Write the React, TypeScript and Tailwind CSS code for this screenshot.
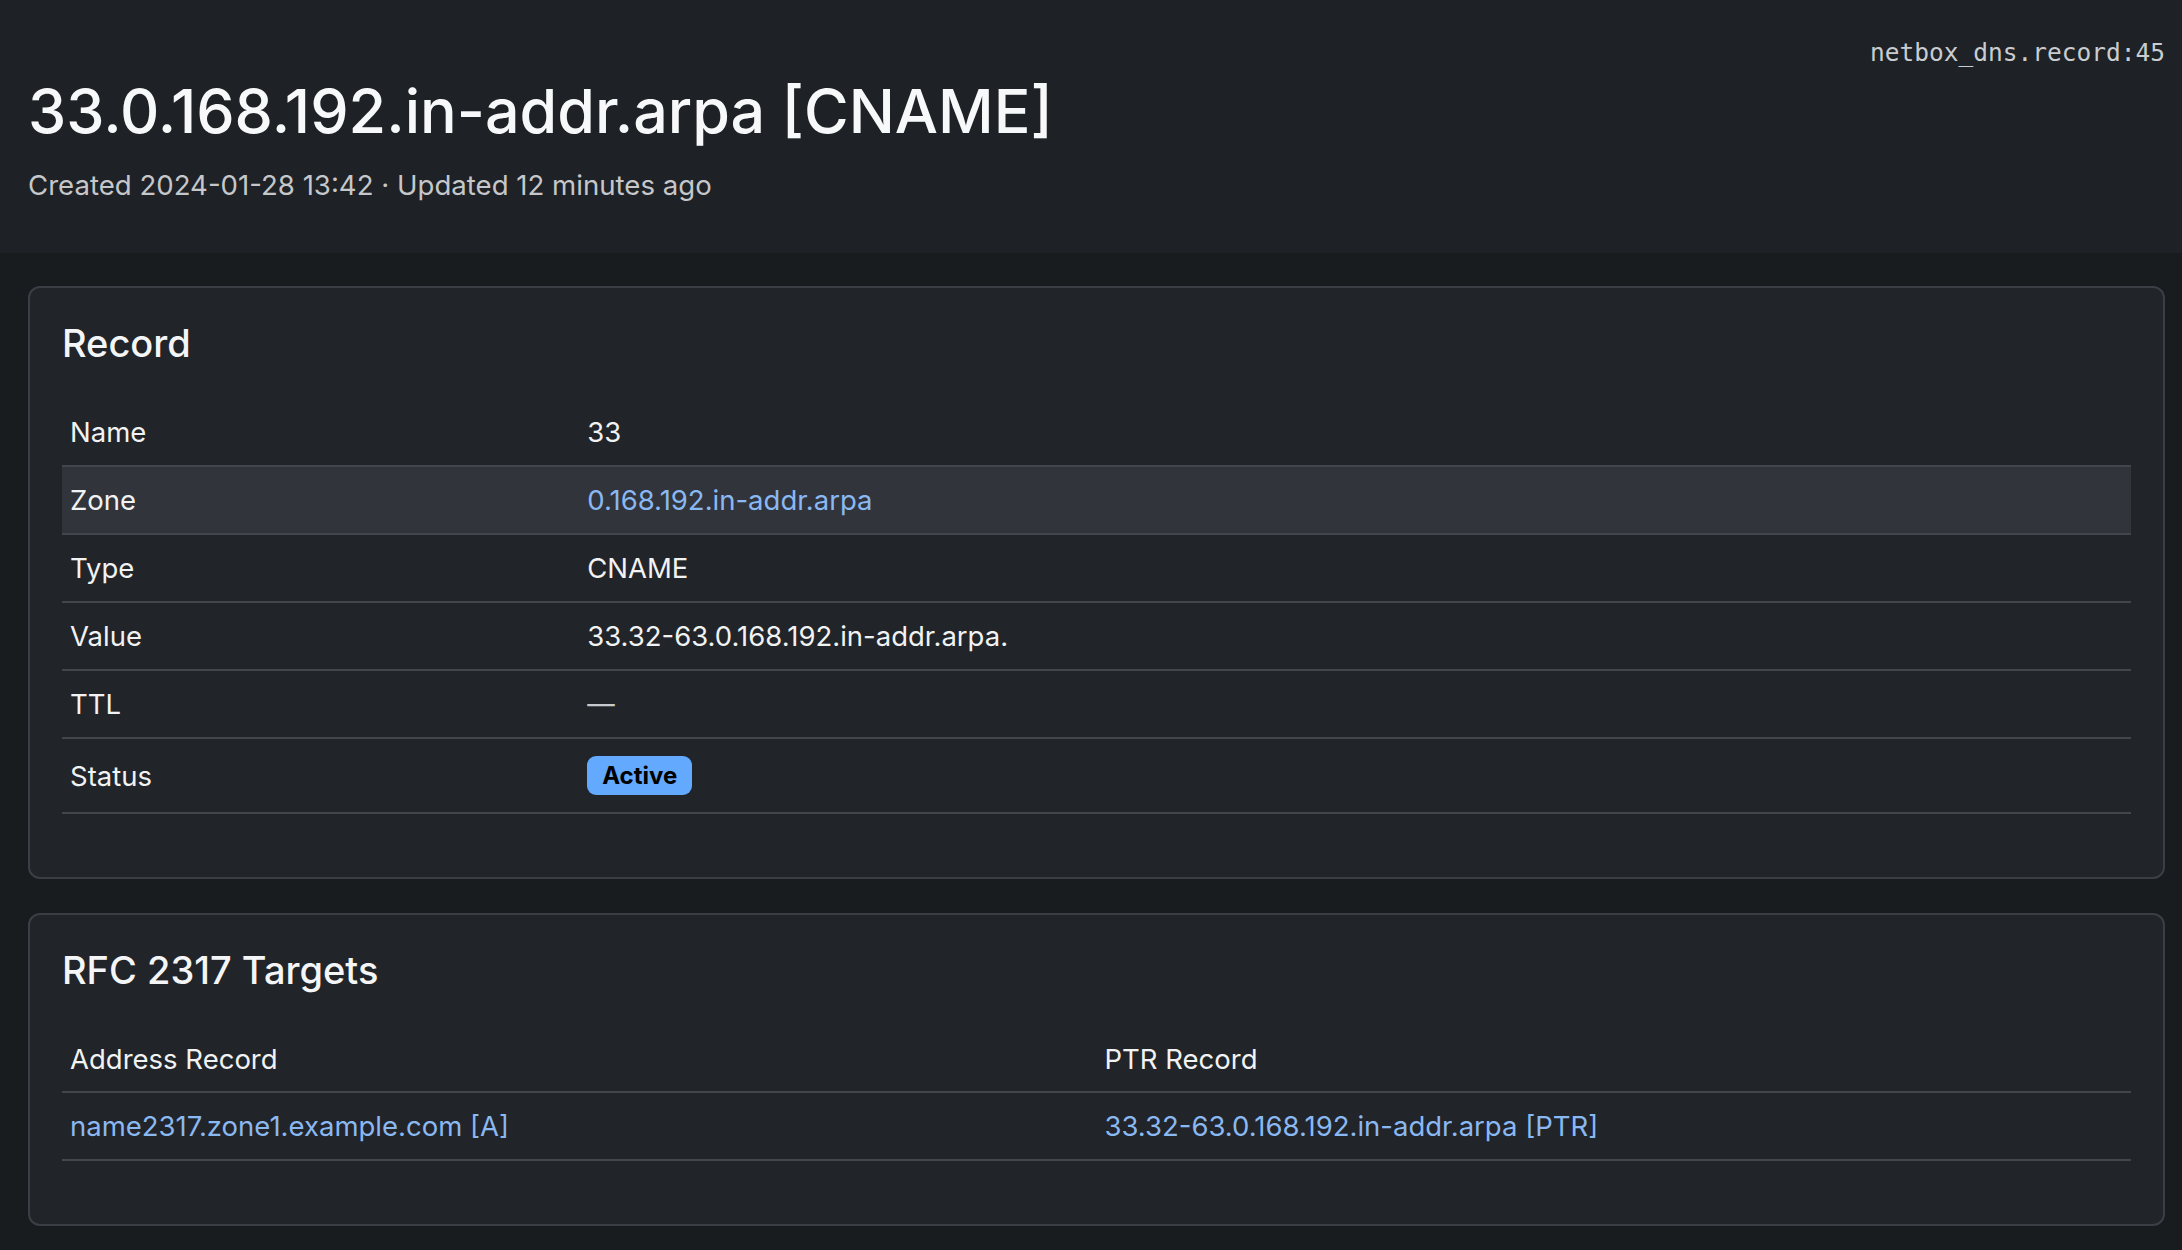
import React from "react";

type Row = { label: string; value: React.ReactNode; highlight?: boolean; tall?: boolean };

const rows: Row[] = [
  { label: "Name", value: "33" },
  {
    label: "Zone",
    value: <a className="text-[#8ab8f2]">0.168.192.in-addr.arpa</a>,
    highlight: true,
  },
  { label: "Type", value: "CNAME" },
  { label: "Value", value: "33.32-63.0.168.192.in-addr.arpa." },
  { label: "TTL", value: <span className="text-[#c8c9cc]">—</span> },
  {
    label: "Status",
    value: (
      <span className="inline-flex h-[39px] items-center rounded-[9px] bg-[#63a9fd] px-[15px] text-[24px] font-bold text-black">
        Active
      </span>
    ),
    tall: true,
  },
];

function Card({ title, bottom, children }: { title: string; bottom: string; children: React.ReactNode }) {
  return (
    <section className={`rounded-[12px] border-2 border-[#3b3f45] bg-[#212428] px-[32px] pt-[31px] ${bottom}`}>
      <h2 className="mb-[32px] text-[38px] leading-[48px] font-medium text-[#f4f5f6]">{title}</h2>
      {children}
    </section>
  );
}

export default function App() {
  return (
    <div className="min-h-screen bg-[#191c1f] font-['Inter',sans-serif] text-[#f1f2f3]">
      <header className="flex h-[253px] items-start justify-between bg-[#1e2125] pr-[17px] pl-[28px]">
        <div className="pt-[75px]">
          <h1 className="text-[61px] leading-[72px] font-medium text-[#f7f8f9]">
            33.0.168.192.in-addr.arpa [CNAME]
          </h1>
          <div className="mt-[20px] text-[27.6px] leading-[36px] text-[#c5c7ca]">
            Created 2024-01-28 13:42 · Updated 12 minutes ago
          </div>
        </div>
        <div className="pt-[37px] font-['DejaVu_Sans_Mono',monospace] text-[24.5px] leading-[32px] text-[#c9ccd0]">
          netbox_dns.record:45
        </div>
      </header>

      <main className="pt-[33px] pr-[17px] pl-[28px]">
        <Card title="Record" bottom="pb-[63px]">
          <div className="text-[27.5px] leading-[36px]">
            {rows.map((r) => (
              <div
                key={r.label}
                className={`grid grid-cols-[25%_75%] items-center border-b-2 border-[#43474d] ${
                  r.tall ? "h-[75px]" : "h-[68px]"
                } ${r.highlight ? "bg-[#31343a]" : ""}`}
              >
                <div className="px-[8px]">{r.label}</div>
                <div className="px-[8px]">{r.value}</div>
              </div>
            ))}
          </div>
        </Card>

        <div className="mt-[34px]">
          <Card title="RFC 2317 Targets" bottom="pb-[63px]">
            <div className="text-[27.5px] leading-[36px]">
              <div className="grid h-[67px] grid-cols-2 items-center border-b-2 border-[#43474d]">
                <div className="px-[8px]">Address Record</div>
                <div className="px-[8px]">PTR Record</div>
              </div>
              <div className="grid h-[68px] grid-cols-2 items-center border-b-2 border-[#43474d] text-[#8ab8f2]">
                <div className="px-[8px]">
                  <a>name2317.zone1.example.com [A]</a>
                </div>
                <div className="px-[8px]">
                  <a>33.32-63.0.168.192.in-addr.arpa [PTR]</a>
                </div>
              </div>
            </div>
          </Card>
        </div>
      </main>
    </div>
  );
}
